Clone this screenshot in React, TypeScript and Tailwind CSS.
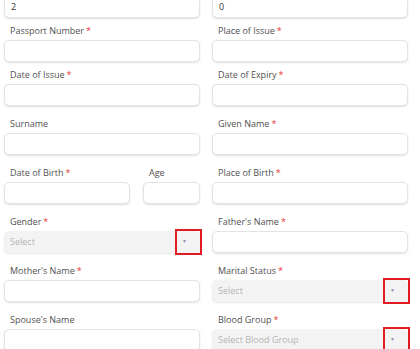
import React from 'react'

const font = { fontFamily: '"Open Sans", "Liberation Sans", sans-serif' }

function Label({ text, req }: { text: string; req?: boolean }) {
  return (
    <div className="h-[12px] mb-[3px] mt-[1px] pl-[6px] text-[9px] leading-[12px] text-[#505050]">
      {text}
      {req && <span className="text-[#e53935] ml-[2px]">*</span>}
    </div>
  )
}

function Input({ value }: { value?: string }) {
  return (
    <div className="h-[22px] rounded-[5px] border border-[#e3e3e3] bg-white shadow-[0_1px_2px_rgba(0,0,0,0.12)] px-[6px] flex items-center text-[9px] text-[#333]">
      {value}
    </div>
  )
}

function Select({ placeholder, marked }: { placeholder: string; marked?: boolean }) {
  return (
    <div className="relative h-[22px] rounded-[5px] bg-[#f3f3f3] shadow-[0_1px_2px_rgba(0,0,0,0.1)] px-[6px] flex items-center justify-between text-[9px] text-[#b3b3b3]">
      <span>{placeholder}</span>
      <span className="mr-[7px] text-[5px] text-[#8a8fa3]">▼</span>
      {marked && <div className="absolute right-[-2px] top-[-2px] w-[27px] h-[26px] border-2 border-[#e01b24]" />}
    </div>
  )
}

function Field({ label, req, children }: { label: string; req?: boolean; children: React.ReactNode }) {
  return (
    <div>
      <Label text={label} req={req} />
      {children}
    </div>
  )
}

export default function App() {
  return (
    <div className="w-[420px] h-[349px] overflow-hidden bg-white pl-[4px] pr-[12px]" style={font}>
      <div className="grid grid-cols-2 gap-x-[12px] -mt-[4px]">
        <Input value="2" />
        <Input value="0" />
      </div>
      <div className="grid grid-cols-2 gap-x-[12px] mt-[6px]">
        <Field label="Passport Number" req><Input /></Field>
        <Field label="Place of Issue" req><Input /></Field>
      </div>
      <div className="grid grid-cols-2 gap-x-[12px] mt-[6px]">
        <Field label="Date of Issue" req><Input /></Field>
        <Field label="Date of Expiry" req><Input /></Field>
      </div>
      <div className="grid grid-cols-2 gap-x-[12px] mt-[11px]">
        <Field label="Surname"><Input /></Field>
        <Field label="Given Name" req><Input /></Field>
      </div>
      <div className="grid grid-cols-2 gap-x-[12px] mt-[11px]">
        <div className="flex gap-[13px]">
          <div className="w-[126px]"><Field label="Date of Birth" req><Input /></Field></div>
          <div className="flex-1"><Field label="Age"><Input /></Field></div>
        </div>
        <Field label="Place of Birth" req><Input /></Field>
      </div>
      <div className="grid grid-cols-2 gap-x-[12px] mt-[11px]">
        <Field label="Gender" req><Select placeholder="Select" marked /></Field>
        <Field label="Father's Name" req><Input /></Field>
      </div>
      <div className="grid grid-cols-2 gap-x-[12px] mt-[11px]">
        <Field label="Mother's Name" req><Input /></Field>
        <Field label="Marital Status" req><Select placeholder="Select" marked /></Field>
      </div>
      <div className="grid grid-cols-2 gap-x-[12px] mt-[11px]">
        <Field label="Spouse's Name"><Input /></Field>
        <Field label="Blood Group" req><Select placeholder="Select Blood Group" marked /></Field>
      </div>
    </div>
  )
}
